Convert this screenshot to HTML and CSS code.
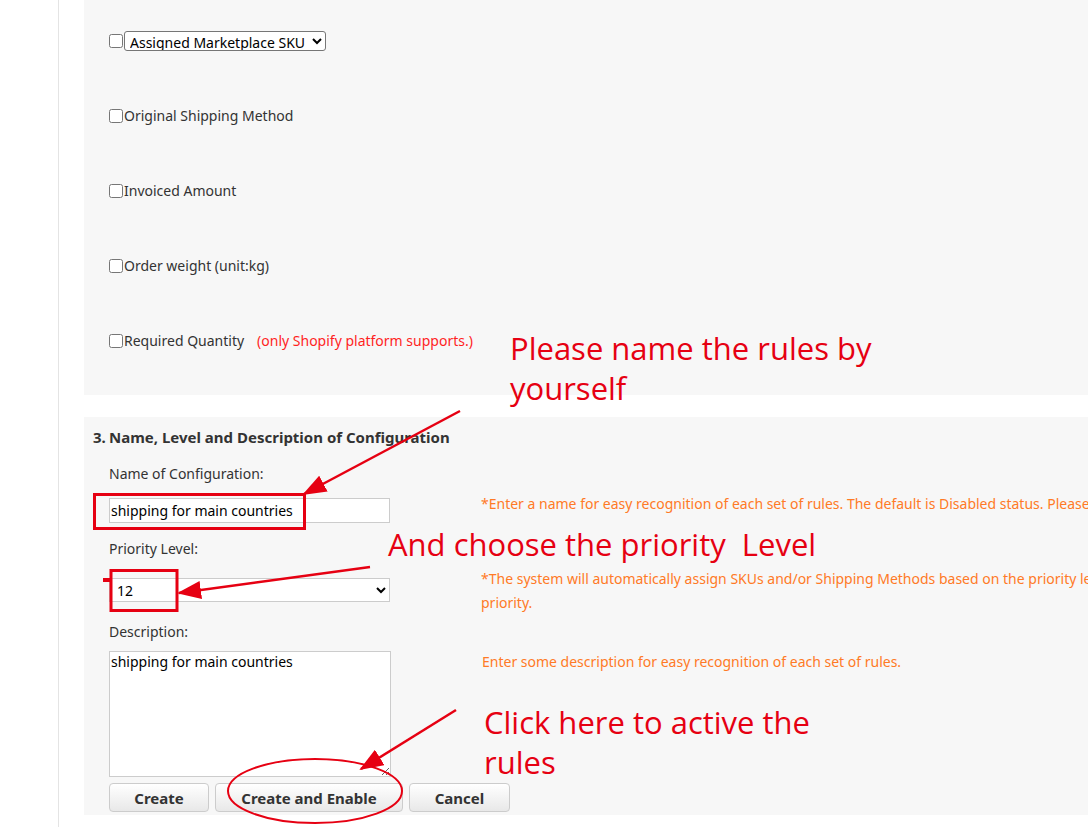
FILE: index.html
```html
<!DOCTYPE html>
<html lang="en">
<head>
    <meta charset="UTF-8">
    <meta name="viewport" content="width=device-width, initial-scale=1.0">
    <title>Configuration Rules</title>
    <link rel="stylesheet" href="styles.css">
</head>
<body>
    <div class="page">
        <div class="sidebar"></div>
        <div class="content">
            <div class="panel panel-options">
                <div class="option-row">
                    <input type="checkbox">
                    <select class="sku-select">
                        <option>Assigned Marketplace SKU</option>
                    </select>
                </div>
                <div class="option-row">
                    <input type="checkbox"><span>Original Shipping Method</span>
                </div>
                <div class="option-row">
                    <input type="checkbox"><span>Invoiced Amount</span>
                </div>
                <div class="option-row">
                    <input type="checkbox"><span>Order weight (unit:kg)</span>
                </div>
                <div class="option-row">
                    <input type="checkbox"><span>Required Quantity</span>
                    <span class="note">(only Shopify platform supports.)</span>
                </div>
            </div>

            <div class="panel panel-config">
                <h3 class="section-title"><span class="num">3.</span>Name, Level and Description of Configuration</h3>

                <label class="field-label" for="config-name">Name of Configuration:</label>
                <div class="field-row row-name">
                    <input type="text" id="config-name" class="text-input" value="shipping for main countries">
                    <p class="hint">*Enter a name for easy recognition of each set of rules. The default is Disabled status. Please enable it after creating.</p>
                </div>

                <label class="field-label label-priority" for="priority">Priority Level:</label>
                <div class="field-row row-priority">
                    <select id="priority" class="level-select">
                        <option>12</option>
                    </select>
                    <p class="hint">*The system will automatically assign SKUs and/or Shipping Methods based on the priority level. The larger the number the higher the<br>priority.</p>
                </div>

                <label class="field-label label-desc" for="description">Description:</label>
                <div class="field-row row-desc">
                    <textarea id="description" class="desc-input">shipping for main countries</textarea>
                    <p class="hint">Enter some description for easy recognition of each set of rules.</p>
                </div>

                <div class="actions">
                    <button class="btn btn-create">Create</button>
                    <button class="btn btn-enable">Create and Enable</button>
                    <button class="btn btn-cancel">Cancel</button>
                </div>
            </div>
        </div>

        <!-- hand drawn markup on top of the screenshot -->
        <svg class="marks" width="1088" height="835" viewBox="0 0 1088 835">
            <defs>
                <marker id="head" markerUnits="userSpaceOnUse" markerWidth="24" markerHeight="18" refX="22" refY="9" orient="auto">
                    <path d="M0,0 L24,9 L0,18 Z" fill="#e60012"/>
                </marker>
            </defs>
            <g fill="none" stroke="#e60012">
                <rect x="94.5" y="494.5" width="210" height="34" stroke-width="3"/>
                <rect x="111" y="570.5" width="66" height="40" stroke-width="3"/>
                <line x1="460" y1="411" x2="304" y2="494" stroke-width="2.5" marker-end="url(#head)"/>
                <line x1="370" y1="567" x2="179" y2="593" stroke-width="2.5" marker-end="url(#head)"/>
                <line x1="456" y1="710" x2="361" y2="769" stroke-width="2.5" marker-end="url(#head)"/>
                <ellipse cx="315" cy="791" rx="87" ry="32" stroke-width="2"/>
            </g>
            <rect x="103" y="578" width="8" height="4" fill="#e60012"/>
        </svg>

        <div class="callout callout-name">Please name the rules by<br>yourself</div>
        <div class="callout callout-priority">And choose the priority&nbsp; Level</div>
        <div class="callout callout-enable">Click here to active the<br>rules</div>
    </div>
</body>
</html>
```

FILE: styles.css
```css
html, body {
    margin: 0;
    overflow: hidden;
}
body {
    background-color: #ffffff;
    font-family: "Noto Sans", "Liberation Sans", sans-serif;
    font-size: 14px;
    color: #333333;
}
.page {
    position: relative;
    display: flex;
    width: 1088px;
    height: 835px;
}
.sidebar {
    width: 58px;
    height: 827px;
    border-right: 1px solid #e4e4e4;
    flex-shrink: 0;
}
.content {
    margin-left: 25px;
    flex: 1;
    min-width: 0;
}
.panel {
    background-color: #f7f7f7;
    overflow: hidden;
}

/* options list */
.panel-options {
    height: 395px;
    padding-top: 3px;
    box-sizing: border-box;
}
.option-row {
    display: flex;
    align-items: center;
    height: 75px;
    padding-left: 25px;
    line-height: 20px;
}
.option-row input[type="checkbox"] {
    width: 14px;
    height: 14px;
    margin: 0 1px 0 0;
}
.sku-select {
    width: 202px;
    height: 20px;
    font-family: inherit;
    font-size: 14px;
    color: #000;
    border: 1px solid #767676;
    border-radius: 3px;
    background-color: #fff;
    padding: 0 1px;
}
.note {
    margin-left: 13px;
    color: #ff1f1f;
}

/* configuration */
.panel-config {
    margin-top: 22px;
    height: 398px;
    padding: 10px 0 0 9px;
    box-sizing: border-box;
}
.section-title {
    margin: 0;
    font-size: 15px;
    line-height: 20px;
    font-weight: bold;
    color: #333;
}
.section-title .num {
    display: inline-block;
    width: 16px;
}
.field-label {
    display: block;
    margin: 17px 0 0 16px;
    line-height: 20px;
}
.label-priority {
    margin-top: 16px;
}
.label-desc {
    margin-top: 20px;
}
.field-row {
    display: flex;
    align-items: flex-start;
    margin-left: 16px;
    white-space: nowrap;
}
.row-name {
    margin-top: 14px;
    height: 25px;
}
.row-priority {
    margin-top: 19px;
    height: 24px;
}
.row-desc {
    margin-top: 9px;
    height: 126px;
}
.hint {
    margin: 0 0 0 91px;
    line-height: 24px;
    color: #ff7a26;
}
.row-name .hint {
    margin-top: -6px;
}
.row-priority .hint {
    margin-top: -11px;
}
.row-desc .hint {
    margin-top: -1px;
}
.text-input, .level-select, .desc-input {
    box-sizing: border-box;
    flex-shrink: 0;
    font-family: inherit;
    font-size: 14px;
    color: #000;
    border: 1px solid #cccccc;
    background-color: #fff;
}
.text-input {
    width: 281px;
    height: 25px;
    padding: 0 1px;
}
.level-select {
    width: 281px;
    height: 24px;
    padding: 0 3px;
    border-radius: 0;
}
.desc-input {
    width: 282px;
    height: 126px;
    padding: 0 1px;
    line-height: 20px;
    resize: both;
}
.actions {
    display: flex;
    gap: 6px;
    margin: 6px 0 0 16px;
}
.btn {
    height: 29px;
    border: 1px solid #cccccc;
    border-radius: 4px;
    background: linear-gradient(#ffffff, #e8e8e8);
    font-family: inherit;
    font-size: 15px;
    font-weight: bold;
    color: #333;
    cursor: pointer;
}
.btn-create {
    width: 100px;
}
.btn-enable {
    width: 188px;
}
.btn-cancel {
    width: 101px;
}

/* annotations */
.marks {
    position: absolute;
    left: 0;
    top: 0;
    pointer-events: none;
}
.callout {
    position: absolute;
    font-family: "Open Sans", "Noto Sans", sans-serif;
    font-size: 31px;
    line-height: 40px;
    color: #e60012;
    white-space: nowrap;
}
.callout-name {
    left: 510px;
    top: 328px;
}
.callout-priority {
    left: 388px;
    top: 524px;
}
.callout-enable {
    left: 484px;
    top: 702px;
}
```
